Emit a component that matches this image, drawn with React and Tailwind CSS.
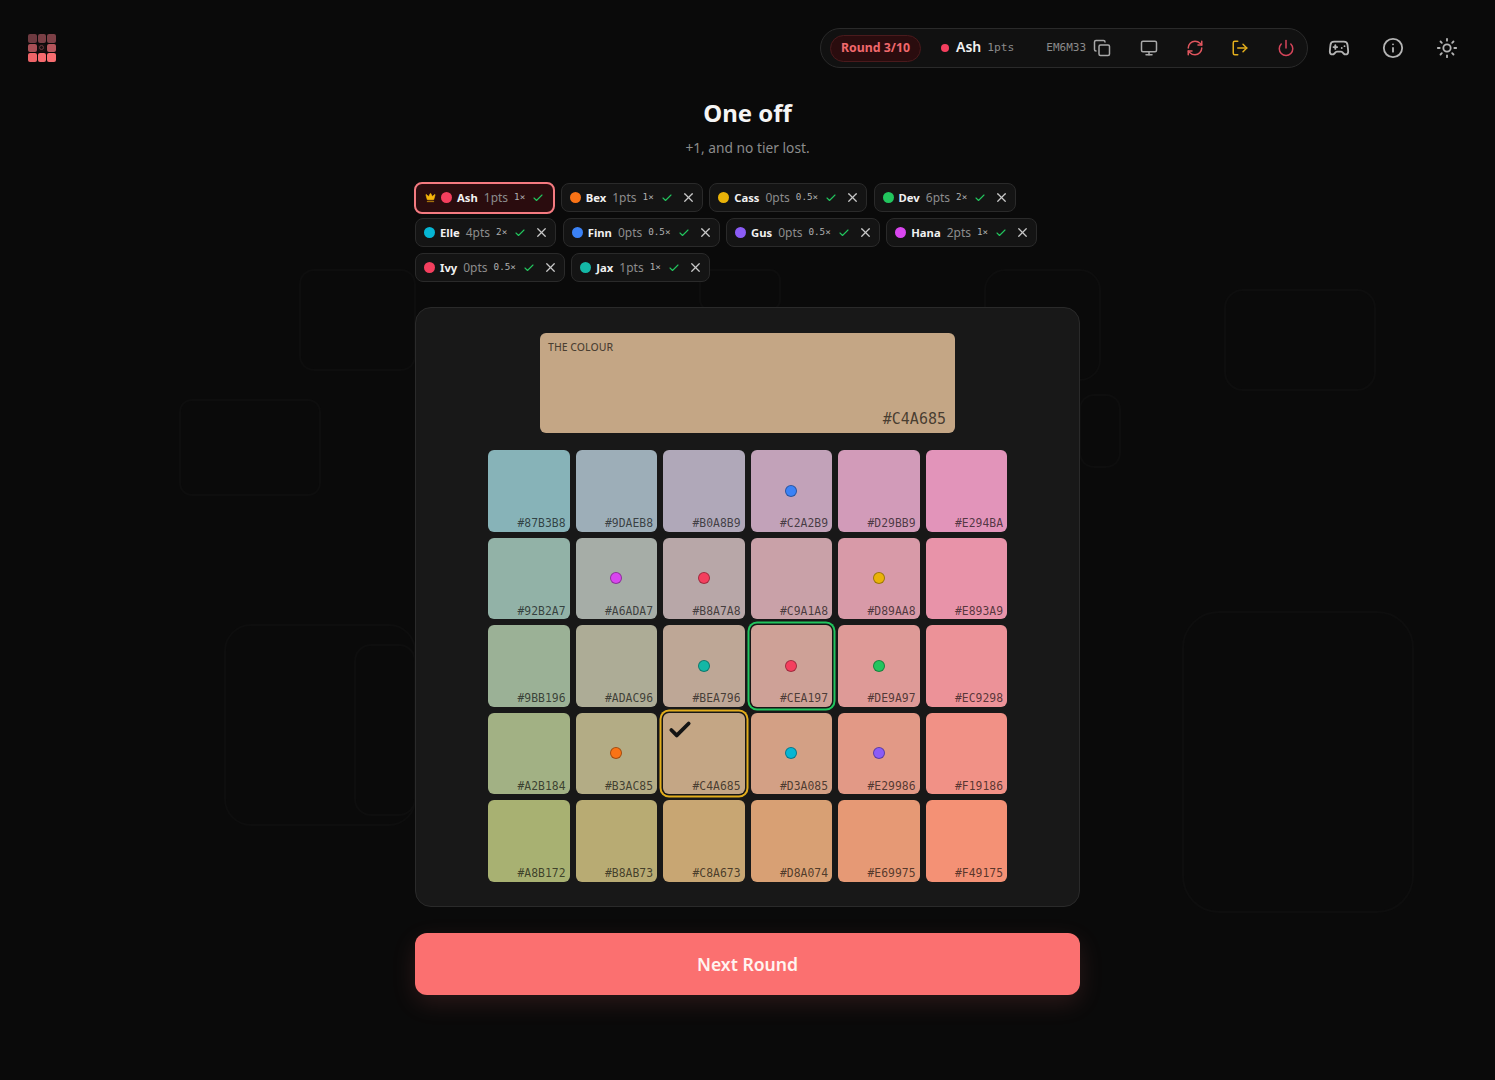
import React from "react";
import { Copy, Monitor, RefreshCw, LogOut, Power, Gamepad2, Info, Sun, Check, X, Crown } from "lucide-react";

const sans = "font-['Noto_Sans','Open_Sans',sans-serif]";
const mono = "font-['DejaVu_Sans_Mono',monospace]";

const players = [
  { n: "Ash", p: 1, m: "1×", c: "#f43f5e", me: true },
  { n: "Bex", p: 1, m: "1×", c: "#f97316" },
  { n: "Cass", p: 0, m: "0.5×", c: "#eab308" },
  { n: "Dev", p: 6, m: "2×", c: "#22c55e" },
  { n: "Elle", p: 4, m: "2×", c: "#06b6d4" },
  { n: "Finn", p: 0, m: "0.5×", c: "#3b82f6" },
  { n: "Gus", p: 0, m: "0.5×", c: "#8b5cf6" },
  { n: "Hana", p: 2, m: "1×", c: "#d946ef" },
  { n: "Ivy", p: 0, m: "0.5×", c: "#f43f5e" },
  { n: "Jax", p: 1, m: "1×", c: "#14b8a6" },
];

const markers = {
  "#C2A2B9": "#3b82f6",
  "#A6ADA7": "#d946ef",
  "#B8A7A8": "#f43f5e",
  "#D89AA8": "#eab308",
  "#BEA796": "#14b8a6",
  "#CEA197": "#f43f5e",
  "#DE9A97": "#22c55e",
  "#B3AC85": "#f97316",
  "#D3A085": "#06b6d4",
  "#E29986": "#8b5cf6",
};

const colours = [
  "#87B3B8", "#9DAEB8", "#B0A8B9", "#C2A2B9", "#D29BB9", "#E294BA",
  "#92B2A7", "#A6ADA7", "#B8A7A8", "#C9A1A8", "#D89AA8", "#E893A9",
  "#9BB196", "#ADAC96", "#BEA796", "#CEA197", "#DE9A97", "#EC9298",
  "#A2B184", "#B3AC85", "#C4A685", "#D3A085", "#E29986", "#F19186",
  "#A8B172", "#B8AB73", "#C8A673", "#D8A074", "#E69975", "#F49175",
];

const logo = ["#6e3a40", "#7a3f45", "#7d4046", "#a84f55", "#1a0f10", "#b5555b", "#ee6468", "#f56a6e", "#f76d70"];

function Logo() {
  return (
    <div className="grid grid-cols-3 grid-rows-3 gap-[1px] w-[28px] h-[28px]">
      {logo.map((c, i) => (
        <div key={i} className="rounded-[2px] flex items-center justify-center" style={{ background: c }}>
          {i === 4 && <div className="w-[5px] h-[5px] rounded-full border border-[#6b3a3e]" />}
        </div>
      ))}
    </div>
  );
}

function Chip({ n, p, m, c, me }) {
  return (
    <div
      className={`flex items-center rounded-lg ${
        me
          ? "pl-[9px] pr-[9px] bg-[#2a0c0e] border-2 border-[#f47a80] ml-[-1px] mr-[-1px] mt-[-1.5px] mb-[-1.5px] h-[32px]"
          : "pl-[8px] pr-[6px] h-[29px] border bg-[#141414] border-[#2a2a2a]"
      }`}
    >
      {me && <Crown size={11} className="text-[#f5b50a] mr-[5px]" fill="#f5b50a" strokeWidth={1.5} />}
      <span className="w-[11px] h-[11px] rounded-full mr-[5px]" style={{ background: c }} />
      <span className="text-[11.25px] font-bold text-[#f1f1f1] leading-none">{n}</span>
      <span className="text-[12px] text-[#8c8c8c] ml-[6px] leading-none">{p}pts</span>
      <span className={`${mono} text-[9.25px] text-[#b0b0b0] ml-[6px] leading-none mb-[2px]`}>{m}</span>
      <Check size={12} strokeWidth={2.25} className="text-[#22c55e] ml-[7px]" />
      {!me && <X size={15} strokeWidth={2} className="text-[#c8c8c8] ml-[8px]" />}
    </div>
  );
}

function Tile({ hex }) {
  const mark = markers[hex];
  const correct = hex === "#CEA197";
  const chosen = hex === "#C4A685";
  return (
    <div
      className={`relative h-[81.5px] rounded-md flex items-center justify-center ${
        correct
          ? "shadow-[0_0_0_1.5px_#161616,0_0_0_3.5px_#22c55e]"
          : chosen
          ? "shadow-[0_0_0_1.5px_#161616,0_0_0_3.5px_#e2ad1c]"
          : ""
      }`}
      style={{ background: hex }}
    >
      {mark && (
        <span className="w-[12px] h-[12px] rounded-full border border-[#00000055]" style={{ background: mark }} />
      )}
      {chosen && (
        <Check size={26} strokeWidth={3.5} className="absolute left-[4px] top-[4px] text-[#141414]" />
      )}
      <span className={`${mono} absolute right-[4px] bottom-[1.5px] text-[11.4px] leading-[14px] text-[#000000a6]`}>{hex}</span>
    </div>
  );
}

function Backdrop() {
  return (
    <svg className="absolute inset-0 pointer-events-none" width="1495" height="1080" fill="none" stroke="#0e0e0e" strokeWidth="2">
      <rect x="1183" y="612" width="230" height="300" rx="36" />
      <rect x="1080" y="395" width="40" height="72" rx="14" />
      <rect x="985" y="270" width="115" height="110" rx="20" />
      <rect x="1225" y="290" width="150" height="100" rx="18" />
      <rect x="225" y="625" width="190" height="200" rx="26" />
      <rect x="355" y="645" width="60" height="170" rx="16" />
      <rect x="180" y="400" width="140" height="95" rx="12" />
      <rect x="300" y="270" width="115" height="100" rx="14" />
      <rect x="700" y="270" width="80" height="40" rx="10" />
    </svg>
  );
}

export default function App() {
  return (
    <div className={`${sans} relative w-full h-[1080px] overflow-hidden bg-[#0a0a0a] text-white`}>
      <Backdrop />
      <div className="relative">
        <header className="h-[97px] pt-[28px] pl-[28px] pr-[37px] flex items-start justify-between">
          <div className="mt-[6px]">
            <Logo />
          </div>
          <div className="flex items-center">
            <div className="flex items-center h-[40px] w-[488px] pl-[9px] rounded-full border border-[#2a2a2a] bg-[#111111]">
              <div className="h-[27px] w-[91px] rounded-full flex items-center justify-center bg-[#2a0c0e] border border-[#4a1a1c] text-[12.3px] font-bold text-[#f0686c]">
                Round 3/10
              </div>
              <span className="w-[8px] h-[8px] rounded-full bg-[#f43f5e] ml-[20px]" />
              <span className="text-[14px] leading-[20px] font-semibold text-[#f1f1f1] ml-[7px] mb-[2px]">Ash</span>
              <span className={`${mono} text-[11.25px] text-[#8a8a8a] ml-[6px]`}>1pts</span>
              <span className={`${mono} text-[11px] text-[#8a8a8a] ml-[32px]`}>EM6M33</span>
              <Copy size={18} className="text-[#a8a8a8] ml-[7px]" />
              <Monitor size={18} className="text-[#a8a8a8] ml-[29px]" />
              <RefreshCw size={18} className="text-[#e0565e] ml-[28px]" />
              <LogOut size={18} className="text-[#e2ad1c] ml-[27px]" />
              <Power size={18} className="text-[#d6455a] ml-[28px]" />
            </div>
            <Gamepad2 size={22} className="text-[#b4b4b4] ml-[20px]" />
            <Info size={22} className="text-[#b4b4b4] ml-[32px]" />
            <Sun size={22} className="text-[#b4b4b4] ml-[32px]" />
          </div>
        </header>

        <main className="w-[665px] ml-[415px] flex flex-col">
          <h1 className="text-[24px] leading-[32px] font-bold text-center text-[#f5f5f5]">One off</h1>
          <p className="text-[13.75px] leading-[20px] text-center text-[#8c8c8c] mt-[8.5px]">+1, and no tier lost.</p>

          <div className="flex flex-wrap gap-x-[6.5px] gap-y-[6px] mt-[25.5px]">
            {players.map((p) => (
              <Chip key={p.n} {...p} />
            ))}
          </div>

          <section className="mt-[25px] h-[600px] rounded-2xl border border-[#2a2a2a] bg-[#181818] pt-[25px] flex flex-col">
            <div className="relative ml-[124px] w-[415px] h-[100px] rounded-md bg-[#C4A685]">
              <span className="absolute left-[8px] top-[7px] text-[10.5px] leading-[14px] font-medium text-[#000000a0]">THE COLOUR</span>
              <span className={`${mono} absolute right-[9px] bottom-[5px] text-[15px] leading-[18px] text-[#000000a6]`}>#C4A685</span>
            </div>
            <div className="grid grid-cols-6 gap-x-[6px] gap-y-[6px] w-[519px] ml-[72px] mt-[17px]">
              {colours.map((h) => (
                <Tile key={h} hex={h} />
              ))}
            </div>
          </section>

          <button className="mt-[26px] h-[62px] rounded-xl bg-[#fb7070] text-[17.6px] font-semibold text-[#fff4f0] shadow-[0_8px_24px_rgba(251,112,112,0.14)]">
            Next Round
          </button>
        </main>
      </div>
    </div>
  );
}
